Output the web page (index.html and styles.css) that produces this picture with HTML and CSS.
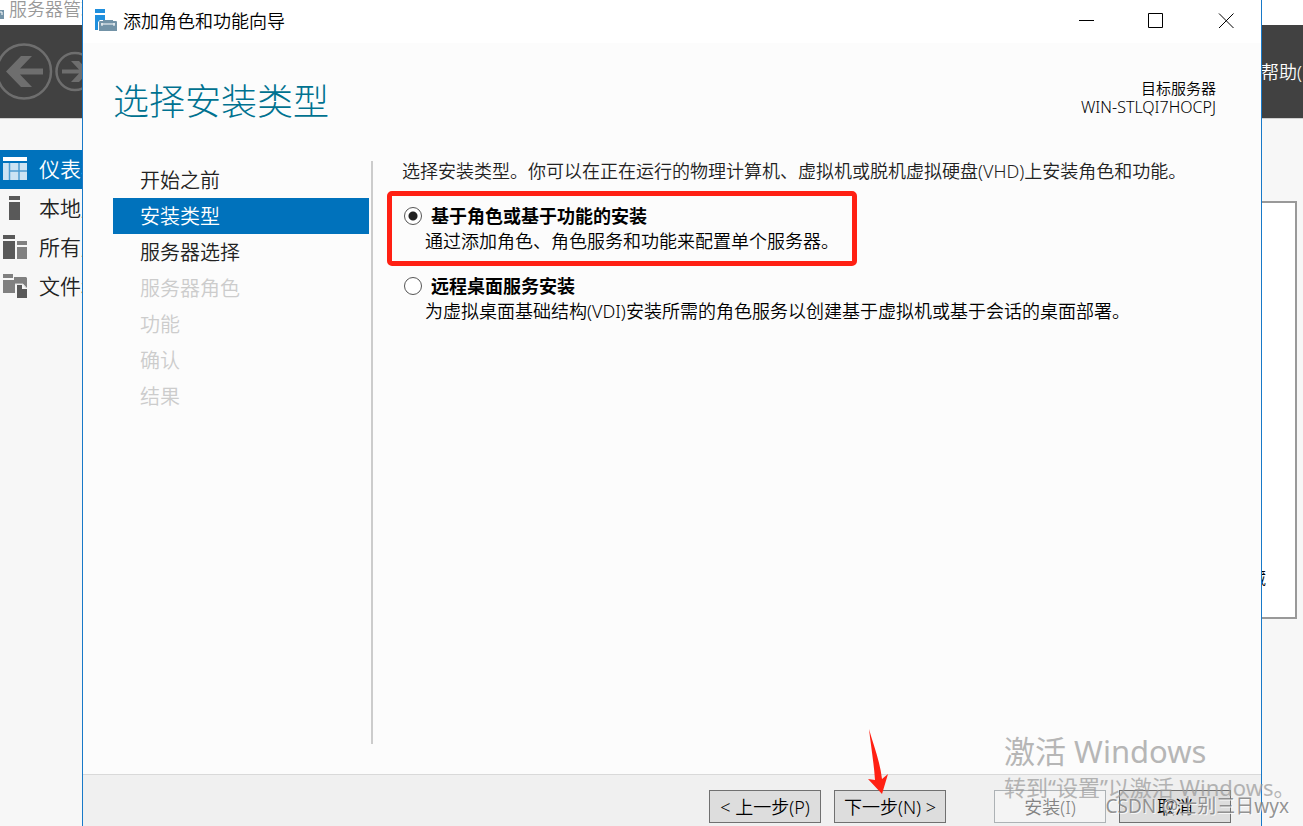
FILE: index.html
```html
<!DOCTYPE html>
<html lang="zh-CN">
<head>
<meta charset="utf-8">
<title>添加角色和功能向导</title>
<link rel="stylesheet" href="styles.css">
</head>
<body>
<div class="desktop">
  <div class="manager">
    <div class="manager-title">
      <svg class="manager-logo" width="4" height="22" viewBox="18 0 4 22" aria-hidden="true"><path d="M4 12h18v9H4z" fill="#7393a7"/><path d="M6 14h14v3" fill="none" stroke="#fff"/></svg>
      <span>服务器管理器</span>
    </div>
    <div class="manager-bar">
      <svg class="manager-arrows" width="94" height="60" viewBox="0 0 94 60" fill="none" stroke="#6e6e6e" aria-hidden="true">
        <circle cx="24" cy="29.500" r="27" stroke-width="2.500"/>
        <path d="M6 29.500 21 14H32L20 26.500H43V32.500H20L32 45H21Z" fill="#6e6e6e" stroke="none"/>
        <circle cx="75" cy="29.500" r="18.500" stroke-width="2.500"/>
        <path d="M89 29.500 79 19H71L79 27.500H62V31.500H79L71 40H79Z" fill="#6e6e6e" stroke="none"/>
      </svg>
      <a class="help" href="#">帮助(H)</a>
    </div>
    <div class="manager-body">
      <nav class="manager-nav">
        <a class="manager-link is-current" href="#">
          <svg width="24" height="24" viewBox="0 0 24 24" aria-hidden="true"><path d="M0 0h24v4H0z" fill="#fff"/><path d="M0 6h24v17H0z" fill="#cce3f3"/><path d="M6.500 6v17M16 6v17M6 14h18" stroke="#4d9cd1" stroke-width="1.500"/></svg>
          <span>仪表板</span></a>
        <a class="manager-link" href="#">
          <svg width="24" height="24" viewBox="0 0 24 24" aria-hidden="true"><path d="M6 0h11v4H6zM6 6h11v18H6z" fill="#595959"/></svg>
          <span>本地服务器</span></a>
        <a class="manager-link" href="#">
          <svg width="24" height="24" viewBox="0 0 24 24" aria-hidden="true"><path d="M0 0h12v4H0zM0 6h12v18H0z" fill="#595959"/><path d="M14 6h10v4H14zM14 12h10v12H14z" fill="#808080"/></svg>
          <span>所有服务器</span></a>
        <a class="manager-link" href="#">
          <svg width="24" height="24" viewBox="0 0 24 24" aria-hidden="true"><path d="M0 0h10v4H0zM0 6h11V3h12l1 1v10l-4-4h-8v9H0z" fill="#808080"/><path d="M14 11h5v4h5v9H14z" fill="#595959"/><path d="M12 10h8l3 4" fill="none" stroke="#ddd"/></svg>
          <span>文件和存储服务</span></a>
      </nav>
      <div class="manager-panel"><span>隐藏</span></div>
    </div>
  </div>

  <section class="wizard" role="dialog" aria-labelledby="wizard-title">
    <header class="titlebar">
      <svg width="23" height="23" viewBox="0 0 23 23" aria-hidden="true"><path d="M0 0h10v4H0zM0 6h10v5H5l-2 2v8H0z" fill="#1f8fdd"/><path d="M4 13q0-1 1-1h3v-1h10v1h3q1 0 1 1v9H4z" fill="#7393a7"/><path d="M6 15h14M7 14v3M19 14v3" stroke="#fff"/></svg>
      <span class="titlebar-text" id="wizard-title">添加角色和功能向导</span>
      <div class="window-controls">
        <button type="button" aria-label="最小化"><svg width="16" height="16" viewBox="0 0 16 16"><path d="M1 7.500h15" stroke="#000"/></svg></button>
        <button type="button" aria-label="最大化"><svg width="16" height="16" viewBox="0 0 16 16"><path d="M.5.5h14v14H.5z" fill="none" stroke="#000"/></svg></button>
        <button type="button" aria-label="关闭"><svg width="16" height="16" viewBox="0 0 16 16"><path d="M1 .5l14.500 14.500M15.500.5L1 15" stroke="#000"/></svg></button>
      </div>
    </header>
    <div class="heading">
      <h1>选择安装类型</h1>
      <div class="target"><div>目标服务器</div><div class="target-name">WIN-STLQI7HOCPJ</div></div>
    </div>
    <div class="content">
      <nav class="steps">
        <a href="#">开始之前</a>
        <a class="is-selected" href="#" aria-current="step">安装类型</a>
        <a href="#">服务器选择</a>
        <span>服务器角色</span>
        <span>功能</span>
        <span>确认</span>
        <span>结果</span>
      </nav>
      <div class="page">
        <p class="intro">选择安装类型。你可以在正在运行的物理计算机、虚拟机或脱机虚拟硬盘(VHD)上安装角色和功能。</p>
        <div class="option is-marked">
          <input type="radio" name="type" id="role" aria-describedby="role-note" checked>
          <label for="role">基于角色或基于功能的安装</label>
          <p id="role-note">通过添加角色、角色服务和功能来配置单个服务器。</p>
        </div>
        <div class="option">
          <input type="radio" name="type" id="remote" aria-describedby="remote-note">
          <label for="remote">远程桌面服务安装</label>
          <p id="remote-note">为虚拟桌面基础结构(VDI)安装所需的角色服务以创建基于虚拟机或基于会话的桌面部署。</p>
        </div>
      </div>
    </div>
    <footer class="actions">
      <button type="button">&lt; 上一步(P)</button>
      <button type="button" class="next">下一步(N) &gt;
        <svg class="pointer" width="21" height="65" viewBox="0 0 21 65" aria-hidden="true"><path d="M1 0C5 15 12 32 14 50L20 45 14 65 0 50 7 51C6 35 3 18 1 0Z" fill="#ff2013"/></svg>
      </button>
      <button type="button" class="install" disabled>安装(I)</button>
      <button type="button">取消</button>
    </footer>
  </section>

  <div class="activation">
    <div class="activation-title">激活 Windows</div>
    <div class="activation-note">转到“设置”以激活 Windows。</div>
  </div>
  <div class="credit">CSDN @士别三日wyx</div>
</div>
</body>
</html>
```
FILE: styles.css
```css
*, *::after { box-sizing: border-box; }

body {
  margin: 0;
  font-family: "Noto Sans", "Noto Sans CJK SC", sans-serif;
  font-size: 18px;
  font-weight: 350;
  line-height: 26px;
  color: #000;
}

h1, p { margin: 0; font-weight: inherit; }
a { color: inherit; text-decoration: none; }
button { font: inherit; color: inherit; padding: 0; }
svg { flex: none; display: block; }

.desktop {
  position: relative;
  height: 100vh;
  min-height: 560px;
  overflow: hidden;
  background: #f7f7f7;
}

/* Window behind the wizard */
.manager { height: 100%; display: flex; flex-direction: column; }
.manager-title {
  height: 25px;
  display: flex;
  align-items: center;
  gap: 5px;
  padding-bottom: 8px;
  background: #fff;
  color: #999;
}
.manager-bar {
  height: 94px;
  display: flex;
  align-items: center;
  justify-content: space-between;
  background: #414141;
  border-bottom: 1px solid #cfcfcf;
  color: #fff;
  overflow: hidden;
}
.help { width: 42px; white-space: nowrap; }
.manager-body {
  flex: 1;
  display: flex;
  padding: 31px 6px 0 0;
}
.manager-nav { width: 240px; }
.manager-link {
  height: 39px;
  display: flex;
  align-items: center;
  gap: 12px;
  padding: 0 0 1px 3px;
  font-size: 21px;
  color: #222;
}
.manager-link.is-current { background: #0072bc; color: #fff; }
.manager-panel {
  flex: 1;
  height: 418px;
  margin-top: 51px;
  display: flex;
  justify-content: flex-end;
  align-items: flex-end;
  padding: 0 29px 26px 0;
  border: 2px solid #999;
  background: #fff;
  font-size: 16px;
}

/* Wizard window */
.wizard {
  position: absolute;
  inset: 0 41px 0 82px;
  display: flex;
  flex-direction: column;
  background: #fcfcfc;
  border: solid #1879c8;
  border-width: 0 1px;
}
.titlebar {
  height: 43px;
  display: flex;
  align-items: center;
  gap: 5px;
  padding: 0 0 2px 12px;
  background: #fff;
}
.window-controls { margin-left: auto; display: flex; }
.window-controls button {
  width: 70px;
  height: 41px;
  display: grid;
  place-items: center;
  border: 0;
  background: none;
}
.heading {
  height: 118px;
  display: flex;
  justify-content: space-between;
  padding: 34px 45px 0 30px;
}
.heading h1 { font-size: 36px; font-weight: 300; line-height: 50px; color: #007290; }
.target { padding-top: 2px; font-size: 15px; line-height: 19px; text-align: right; }
.target-name { font-size: 16px; }
.content {
  flex: 1;
  display: flex;
  padding: 0 30px 30px;
}
.steps {
  width: 260px;
  padding: 1px 2px 0 0;
  border-right: 2px solid #ccc;
  font-size: 20px;
  color: #222;
}
.steps > * {
  display: block;
  height: 36px;
  padding-left: 27px;
  line-height: 37px;
}
.steps > span { color: #ccc; }
.steps > .is-selected { background: #0072bc; color: #fff; }
.page { flex: 1; padding-left: 29px; }
.intro { padding-bottom: 22px; line-height: 20px; color: #222; }
.option {
  position: relative;
  display: grid;
  grid-template-columns: 18px 1fr;
  column-gap: 9px;
  align-items: center;
  margin-bottom: 20px;
  padding-left: 2px;
}
.option label { font-weight: 700; }
.option p { grid-column: 1 / -1; padding-left: 21px; line-height: 24px; }
.option input {
  appearance: none;
  width: 18px;
  height: 18px;
  margin: 0;
  border: 1px solid #555;
  border-radius: 50%;
  background: #fff;
}
.option input:checked { background: radial-gradient(circle, #222 4px, #fff 5px); }
.option.is-marked::after {
  content: "";
  position: absolute;
  inset: -12px auto -13px -15px;
  width: 470px;
  border: 5px solid #ff2013;
  border-radius: 5px;
  pointer-events: none;
}
.actions {
  height: 52px;
  display: flex;
  justify-content: flex-end;
  gap: 13px;
  padding: 15px 30px 0;
  background: #f0f0f0;
  border-top: 1px solid #d9d9d9;
}
.actions button {
  width: 112px;
  height: 33px;
  border: 1px solid #707070;
  background: #ddd;
  white-space: nowrap;
}
.actions .next { position: relative; }
.actions .install {
  margin-left: 35px;
  border-color: #adb2b5;
  background: #f4f4f4;
  color: #838383;
}
.pointer { position: absolute; left: 33px; bottom: 28px; }

/* Watermarks */
.activation {
  position: absolute;
  right: 8px;
  bottom: 24px;
  width: 291px;
  color: #999;
  font-weight: 400;
  opacity: 0.7;
  white-space: nowrap;
  pointer-events: none;
}
.activation-title { font-size: 31px; line-height: 42px; }
.activation-note { font-size: 22px; line-height: 30px; }
.credit {
  position: absolute;
  right: 14px;
  bottom: 7px;
  font-size: 19px;
  font-weight: 400;
  color: rgba(120, 120, 120, 0.8);
  text-shadow: 1px 1px 0 rgba(255, 255, 255, 0.8);
  pointer-events: none;
}
```
